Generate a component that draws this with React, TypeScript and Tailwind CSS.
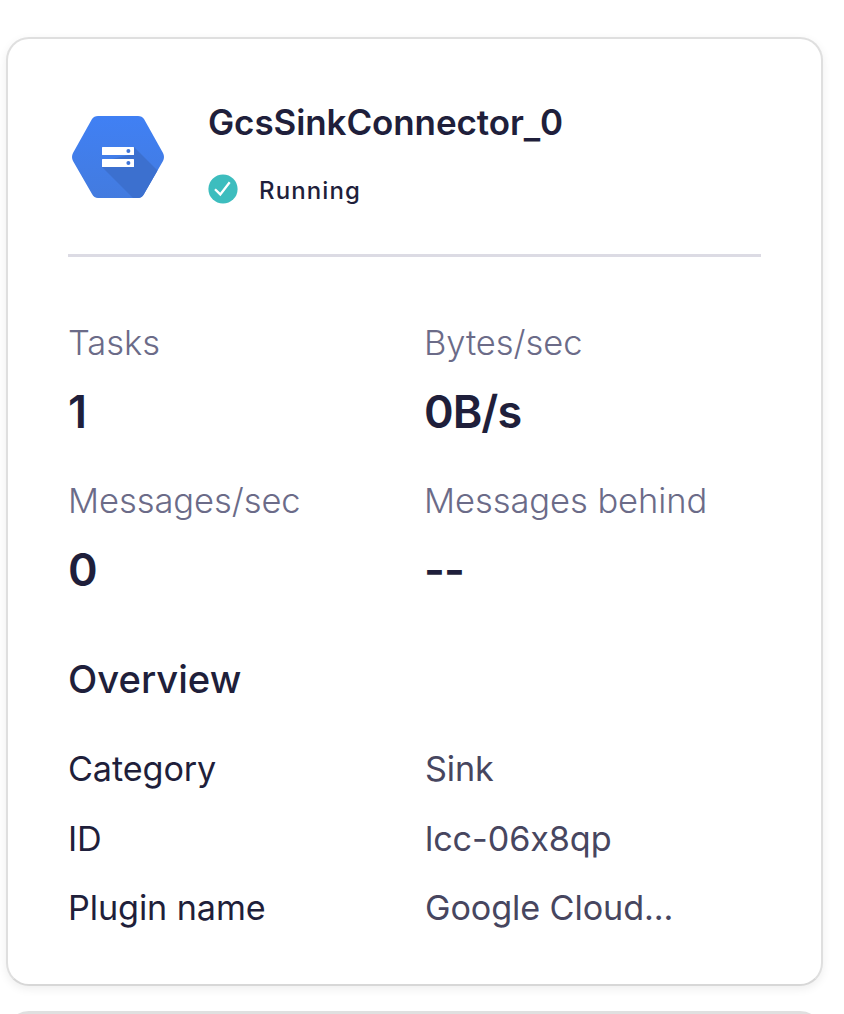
const label = "font-light text-[34.5px] leading-[44px] tracking-[-0.06px] text-[#6b6b88]";
const value = "mt-[19px] font-semibold text-[45px] leading-[56px] tracking-[-1px]";

const stats = [
  ["Tasks", "1"],
  ["Bytes/sec", "0B/s"],
  ["Messages/sec", "0"],
  ["Messages behind", "--"],
];
const overview = [
  ["Category", "Sink"],
  ["ID", "lcc-06x8qp"],
  ["Plugin name", "Google Cloud..."],
];

function ConnectorIcon() {
  return (
    <svg className="mt-[15px] ml-[3px] h-[86px] w-[94px] shrink-0" viewBox="0 0 94 86" fill="none">
      <defs>
        <linearGradient id="hexagon" x1="47" y1="2" x2="47" y2="84" gradientUnits="userSpaceOnUse">
          <stop stopColor="#4080f4" />
          <stop offset="1" stopColor="#437bdf" />
        </linearGradient>
        <clipPath id="outline">
          <path d="M27 2H67Q71 2 73 5L92 39Q94 43 92 47L73 80Q71 84 67 84H27Q23 84 21 80L2 47Q0 43 2 39L21 5Q23 2 27 2Z" />
        </clipPath>
      </defs>
      <g clipPath="url(#outline)">
        <path d="M0 0H94V86H0Z" fill="url(#hexagon)" />
        <path d="M63 33L94 64V86H64L31 53L41 45L58 41Z" fill="#3c70cf" />
      </g>
      <rect x="31" y="33" width="32" height="8" rx=".5" fill="white" />
      <rect x="31" y="45" width="32" height="8" rx=".5" fill="white" />
      <circle cx="57.4" cy="37" r="2" fill="#3f75d8" />
      <circle cx="57.4" cy="49" r="2" fill="#3f75d8" />
    </svg>
  );
}

export default function App() {
  return (
    <div className="flex h-[1014px] w-[844px] flex-col overflow-hidden bg-white pt-[37px] pl-[6px] font-['Inter',sans-serif] text-[#1f1f3b] [font-feature-settings:'calt'_0]">
      <section className="h-[949px] w-[817px] shrink-0 rounded-[23px] border-[2px] border-[#dfdfdf] border-b-[#d7d7d7] bg-white px-[60px] pt-[60px] shadow-[0_3px_10px_rgba(0,0,0,0.07)]">
        <header className="flex h-[158px] w-[693px] border-b-[3px] border-[#dcdbe4]">
          <ConnectorIcon />
          <div className="ml-[43px]">
            <h1 className="h-[48px] text-[35px] font-semibold leading-[46px] tracking-[-0.1px]">
              GcsSinkConnector<span className="align-[-3px] leading-none">_</span>0
            </h1>
            <div className="mt-[23px] flex items-center gap-[21px] text-[24px] font-medium leading-[38px] tracking-[1.1px]">
              <svg className="-mt-[3px] h-[30px] w-[30px]" viewBox="0 0 30 30" fill="none">
                <circle cx="15" cy="15" r="14.6" fill="#3dbdbe" />
                <path d="m7 15.2 5.3 5.2L21.7 8.3" stroke="white" strokeWidth="2.3" />
              </svg>
              <span className="pt-[2px]">Running</span>
            </div>
          </div>
        </header>
        <dl className="mt-[64px] grid grid-cols-[356px_1fr] gap-y-[32px]">
          {stats.map(([name, amount]) => (
            <div key={name} className="h-[126px]">
              <dt className={label}>{name}</dt>
              <dd className={value}>{amount}</dd>
            </div>
          ))}
        </dl>
        <h2 className="mt-[44px] text-[38.2px] font-medium leading-[60px]">Overview</h2>
        <dl className="mt-[38px] grid gap-y-[25.5px] text-[34.2px] leading-[44px] tracking-[-0.1px]">
          {overview.map(([name, amount]) => (
            <div key={name} className="grid grid-cols-[357px_1fr]">
              <dt>{name}</dt>
              <dd className="text-[#47465f]">{amount}</dd>
            </div>
          ))}
        </dl>
      </section>
      <section className="mt-[25px] h-[60px] w-[817px] shrink-0 rounded-[23px] border-[3px] border-[#e0e0e0] bg-white" />
    </div>
  );
}
